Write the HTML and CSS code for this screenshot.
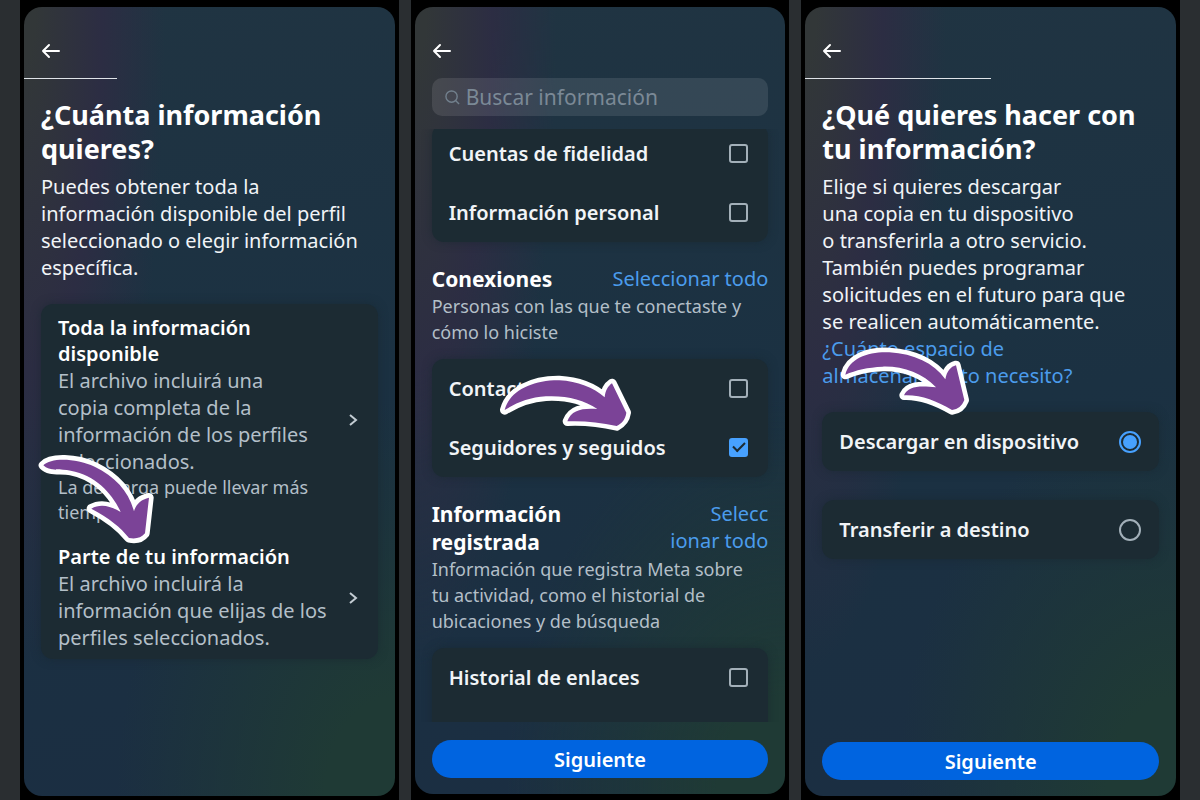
FILE: index.html
```html
<!DOCTYPE html>
<html lang="es">
<head>
    <meta charset="UTF-8">
    <meta name="viewport" content="width=device-width, initial-scale=1.0">
    <title>Descargar tu información</title>
    <link rel="stylesheet" href="styles.css">
</head>
<body>

<main class="steps">

    <!-- Paso 1: cantidad de información -->
    <section class="phone">
        <div class="screen">
            <header class="topbar">
                <button class="back" type="button" aria-label="Atrás">
                    <svg viewBox="0 0 20 16"><path d="M8 2 2 8l6 6M2 8h16"/></svg>
                </button>
            </header>
            <div class="progress"><div class="progress-bar" style="width: 25%"></div></div>
            <div class="content">
                <h1>¿Cuánta información quieres?</h1>
                <p class="intro">Puedes obtener toda la información disponible del perfil seleccionado o elegir información específica.</p>
                <div class="card">
                    <button class="option" type="button">
                        <span class="option-text">
                            <span class="option-title">Toda la información disponible</span>
                            <span class="option-body">El archivo incluirá una<br>copia completa de la información de los perfiles seleccionados.</span>
                            <span class="option-note">La descarga puede llevar más tiempo.</span>
                        </span>
                        <svg class="chevron" viewBox="0 0 10 14"><path d="M2 2l6 5-6 5"/></svg>
                    </button>
                    <button class="option" type="button">
                        <span class="option-text">
                            <span class="option-title">Parte de tu información</span>
                            <span class="option-body">El archivo incluirá la información que elijas de los perfiles seleccionados.</span>
                        </span>
                        <svg class="chevron" viewBox="0 0 10 14"><path d="M2 2l6 5-6 5"/></svg>
                    </button>
                </div>
            </div>
            <svg class="pointer pointer-part" viewBox="0 0 378 294">
                <path d="M28 46C50 22 126 24 182 50C242 80 284 122 300 184C306 162 322 148 345 143L333 250C322 264 304 268 285 264C260 232 225 204 172 176C200 160 230 168 260 186C236 132 186 76 110 62C80 56 46 66 28 46Z"/>
            </svg>
        </div>
    </section>

    <!-- Paso 2: categorías -->
    <section class="phone phone-list">
        <div class="screen">
            <header class="topbar">
                <button class="back" type="button" aria-label="Atrás">
                    <svg viewBox="0 0 20 16"><path d="M8 2 2 8l6 6M2 8h16"/></svg>
                </button>
            </header>
            <label class="search">
                <svg viewBox="0 0 16 16"><circle cx="7" cy="7" r="6"/><path d="M11 11l4 4"/></svg>
                <input type="search" placeholder="Buscar información" aria-label="Buscar información">
            </label>
            <div class="list">
                <div class="card card-cut">
                    <label class="row">Cuentas de fidelidad <input type="checkbox"></label>
                    <label class="row">Información personal <input type="checkbox"></label>
                </div>

                <div class="group-head">
                    <h2>Conexiones</h2>
                    <a href="#">Seleccionar todo</a>
                </div>
                <p class="group-text">Personas con las que te conectaste y cómo lo hiciste</p>
                <div class="card">
                    <label class="row">Contactos <input type="checkbox"></label>
                    <label class="row">Seguidores y seguidos <input type="checkbox" checked></label>
                </div>

                <div class="group-head">
                    <h2>Información<br>registrada</h2>
                    <a href="#">Selecc<br>ionar todo</a>
                </div>
                <p class="group-text">Información que registra Meta sobre<br>tu actividad, como el historial de ubicaciones y de búsqueda</p>
                <div class="card card-open">
                    <label class="row">Historial de enlaces <input type="checkbox"></label>
                </div>
            </div>
            <footer class="footer">
                <button class="next" type="button">Siguiente</button>
            </footer>
            <svg class="pointer pointer-followers" viewBox="0 0 420 198">
                <path d="M26 120C40 64 108 30 190 31C245 34 292 52 326 82C328 62 336 48 348 40L391 128C388 148 378 160 362 168C310 156 260 152 214 154C226 120 258 114 304 117C262 88 210 76 150 79C100 82 62 98 26 120Z"/>
            </svg>
        </div>
    </section>

    <!-- Paso 3: destino -->
    <section class="phone">
        <div class="screen">
            <header class="topbar">
                <button class="back" type="button" aria-label="Atrás">
                    <svg viewBox="0 0 20 16"><path d="M8 2 2 8l6 6M2 8h16"/></svg>
                </button>
            </header>
            <div class="progress"><div class="progress-bar" style="width: 50%"></div></div>
            <div class="content">
                <h1>¿Qué quieres hacer con<br>tu información?</h1>
                <p class="intro">Elige si quieres descargar<br>una copia en tu dispositivo<br>o transferirla a otro servicio.<br>También puedes programar<br>solicitudes en el futuro para que<br>se realicen automáticamente.<br><a href="#">¿Cuánto espacio de<br>almacenamiento necesito?</a></p>
                <div class="card choice">
                    <label class="row">Descargar en dispositivo <input type="radio" name="destino" checked></label>
                </div>
                <div class="card choice">
                    <label class="row">Transferir a destino <input type="radio" name="destino"></label>
                </div>
            </div>
            <footer class="footer">
                <button class="next" type="button">Siguiente</button>
            </footer>
            <svg class="pointer pointer-device" viewBox="0 0 420 240">
                <path d="M28 104C40 54 100 34 160 37C235 42 292 68 328 118C332 94 344 80 360 76L385 180C378 198 366 208 348 210C300 182 255 164 204 166C216 138 250 136 300 142C260 100 200 78 140 80C95 82 60 90 28 104Z"/>
            </svg>
        </div>
    </section>

</main>

</body>
</html>
```
FILE: styles.css
```css
* {
    box-sizing: border-box;
}
body {
    margin: 0;
    height: 100vh;
    background-color: #2a2e31;
    color: #f1f4f7;
    font-family: "Noto Sans", sans-serif;
    font-size: 20px;
    line-height: 27px;
}
h1, h2, p {
    margin: 0;
}
button, input {
    font: inherit;
    color: inherit;
}
button {
    border: none;
    background: none;
    padding: 0;
    cursor: pointer;
}
a {
    color: #4b9cec;
    text-decoration: none;
}
.steps {
    display: grid;
    grid-template-columns: repeat(3, minmax(0, 1fr));
    gap: 12px;
    height: 100%;
    padding: 0 20px;
}
.phone {
    min-height: 0;
    padding: 7px 4px 4px;
    background-color: #000;
}
.phone-list {
    padding-bottom: 6px;
}
.screen {
    position: relative;
    display: flex;
    flex-direction: column;
    height: 100%;
    border-radius: 18px;
    background:
        radial-gradient(ellipse 38% 84% at 0 0, #323738 8%, #2c2d43 55%, transparent 100%),
        radial-gradient(ellipse 75% 50% at 100% 100%, #1f3a35 25%, transparent 100%),
        linear-gradient(170deg, #203442, #1b3142 50%, #1b2e42);
}

/* Cabecera */
.topbar {
    display: flex;
    align-items: center;
    height: 71px;
    padding: 16px 17px 0;
}
.back {
    display: flex;
}
.back svg {
    width: 20px;
    height: 16px;
    fill: none;
    stroke: #fff;
    stroke-width: 2;
    stroke-linecap: round;
    stroke-linejoin: round;
}
.progress-bar {
    height: 1px;
    background-color: #dfe3e8;
}
.content {
    flex: 1;
    padding: 19px 17px 0;
}
h1 {
    font-size: 27px;
    font-weight: 700;
    line-height: 34px;
    color: #fff;
}
.intro {
    margin: 7px 0 23px;
}

/* Tarjetas */
.card {
    border-radius: 12px;
    background-color: #1c2b33;
    box-shadow: 0 0 10px rgba(24, 38, 46, 0.6);
}
.option {
    display: flex;
    align-items: center;
    justify-content: space-between;
    gap: 12px;
    width: 100%;
    padding: 11px 20px 8px 17px;
    text-align: left;
}
.option-text span {
    display: block;
}
.option-text .option-title {
    max-width: 240px;
    line-height: 26px;
    font-weight: 600;
    color: #fff;
}
.option-body, .option-note {
    color: #b3bfc8;
}
.option-note {
    font-size: 18px;
    line-height: 25px;
}
.chevron {
    flex: none;
    width: 10px;
    height: 14px;
    fill: none;
    stroke: #c3ccd3;
    stroke-width: 2;
}
.row {
    display: flex;
    align-items: center;
    justify-content: space-between;
    height: 59px;
    padding: 0 20px 0 17px;
    font-weight: 600;
}
.choice {
    margin-bottom: 29px;
}
.choice .row {
    padding-right: 18px;
}

/* Casillas y botones de opción */
input[type="checkbox"], input[type="radio"] {
    appearance: none;
    flex: none;
    display: grid;
    place-items: center;
    margin: 0;
    border: 2px solid #a3b0b9;
}
input[type="checkbox"] {
    width: 19px;
    height: 19px;
    border-radius: 3px;
}
input[type="checkbox"]:checked {
    border-color: #47a1ff;
    background-color: #47a1ff;
}
input[type="checkbox"]:checked::after {
    content: "";
    width: 10px;
    height: 5px;
    margin-bottom: 4px;
    border: solid #1c2b33;
    border-width: 0 0 2px 2px;
    transform: rotate(-45deg);
}
input[type="radio"] {
    width: 22px;
    height: 22px;
    border-radius: 50%;
}
input[type="radio"]:checked {
    border-color: #47a1ff;
}
input[type="radio"]:checked::after {
    content: "";
    width: 14px;
    height: 14px;
    border-radius: 50%;
    background-color: #47a1ff;
}

/* Buscador */
.search {
    display: flex;
    align-items: center;
    gap: 6px;
    height: 38px;
    margin: 0 17px 13px;
    padding: 0 13px;
    border-radius: 10px;
    background-color: rgba(255, 255, 255, 0.1);
}
.search svg {
    flex: none;
    width: 15px;
    height: 15px;
    fill: none;
    stroke: #72808d;
    stroke-width: 1.5;
}
.search input {
    flex: 1;
    min-width: 0;
    padding: 0;
    border: none;
    outline: none;
    background: none;
    font-size: 21px;
}
.search input::placeholder {
    color: #7b8996;
}

/* Lista de categorías */
.list {
    flex: 1;
    min-height: 0;
    padding: 0 17px;
    overflow: hidden;
}
.card-cut {
    margin-top: -5px;
}
.card-open {
    padding-bottom: 59px;
}
.group-head {
    display: flex;
    justify-content: space-between;
    margin-top: 23px;
    text-align: right;
}
.group-head h2 {
    font-size: 21px;
    font-weight: 700;
    line-height: 28px;
    text-align: left;
    color: #fff;
}
.group-text {
    margin-bottom: 14px;
    font-size: 18px;
    line-height: 26px;
    color: #b3bfc8;
}
.footer {
    padding: 18px 17px 16px;
}
.next {
    width: 100%;
    height: 38px;
    border-radius: 19px;
    background-color: #0064e0;
    font-weight: 600;
    color: #fff;
}

/* Flechas que señalan la opción */
.pointer {
    position: absolute;
    pointer-events: none;
    overflow: visible;
}
.pointer path {
    fill: #7b4397;
    stroke: #fff;
    stroke-width: 28;
    stroke-linejoin: round;
    paint-order: stroke;
}
.pointer-part {
    left: 10px;
    top: 443px;
    width: 126px;
}
.pointer-followers {
    left: 81px;
    top: 363px;
    width: 140px;
}
.pointer-device {
    left: 31px;
    top: 333px;
    width: 140px;
}
```
